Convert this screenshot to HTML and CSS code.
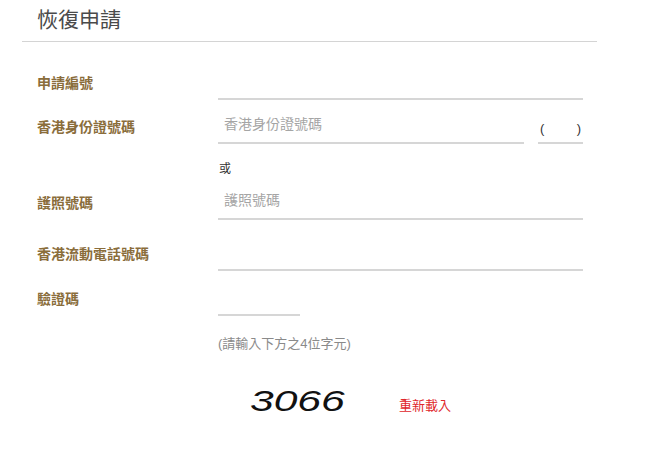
FILE: index.html
```html
<!DOCTYPE html>
<html lang="zh-Hant">
<head>
<meta charset="utf-8">
<title>恢復申請</title>
<link rel="stylesheet" href="styles.css">
</head>
<body>
<div class="page">
  <div class="header">
    <h1 class="title">恢復申請</h1>
  </div>
  <form class="form">
    <div class="row row-first">
      <label class="label">申請編號</label>
      <div class="field"><input class="input" type="text"></div>
    </div>
    <div class="row row-id">
      <label class="label">香港身份證號碼</label>
      <div class="field field-id">
        <input class="input input-id" type="text" placeholder="香港身份證號碼">
        <div class="check">
          <span class="paren">(</span>
          <span class="paren">)</span>
        </div>
      </div>
    </div>
    <div class="row row-or">
      <span></span>
      <div class="or">或</div>
    </div>
    <div class="row row-passport">
      <label class="label">護照號碼</label>
      <div class="field"><input class="input" type="text" placeholder="護照號碼"></div>
    </div>
    <div class="row row-phone">
      <label class="label">香港流動電話號碼</label>
      <div class="field"><input class="input" type="text"></div>
    </div>
    <div class="row row-captcha">
      <label class="label">驗證碼</label>
      <div class="field"><input class="input input-captcha" type="text"></div>
    </div>
    <div class="row row-hint">
      <span></span>
      <div class="hint">(請輸入下方之4位字元)</div>
    </div>
    <div class="row row-image">
      <span></span>
      <div class="captcha-line">
        <div class="captcha-img"><span class="digits">3066</span></div>
        <a class="reload" href="#">重新載入</a>
      </div>
    </div>
  </form>
</div>
</body>
</html>
```

FILE: styles.css
```css
* { box-sizing: border-box; }
html, body { margin: 0; padding: 0; background: #fff; }
body {
  font-family: "Noto Sans CJK TC", "Noto Sans", "Liberation Sans", sans-serif;
  color: #333;
}
.page {
  margin-left: 22px;
  width: 575px;
}
.header {
  height: 42px;
  padding: 3px 0 0 15px;
  border-bottom: 1px solid #d4d4d4;
}
.title {
  margin: 0;
  font-size: 21px;
  line-height: 30px;
  font-weight: 400;
  color: #4a4a4a;
}
.form {
  padding-left: 15px;
}
.row {
  display: grid;
  grid-template-columns: 181px 365px;
  align-items: center;
}
.row-first { margin-top: 24px; }
.row-id { margin-top: 10px; }
.row-or { margin-top: 16px; }
.row-passport { margin-top: 10px; }
.row-phone { margin-top: 17px; }
.row-captcha { margin-top: 11px; }
.row-hint { margin-top: 19px; }
.row-image { margin-top: 31px; }

.label {
  font-size: 14px;
  font-weight: 700;
  color: #8a6d3b;
  line-height: 20px;
  padding-bottom: 3px;
}
.field {
  display: flex;
  align-items: flex-end;
}
.input {
  display: block;
  width: 100%;
  height: 34px;
  border: 0;
  border-bottom: 2px solid #d6d6d6;
  padding: 0 6px 6px;
  font-family: inherit;
  font-size: 14px;
  color: #333;
  background: transparent;
  outline: none;
}
.input::placeholder { color: #a5a5a5; }
.input-id { width: 306px; }
.check {
  margin-left: 14px;
  width: 45px;
  height: 34px;
  border-bottom: 2px solid #d6d6d6;
  display: flex;
  justify-content: space-between;
  align-items: center;
  padding: 4px 2px 0 2px;
}
.paren {
  font-family: "Liberation Sans", sans-serif;
  font-size: 13px;
  color: #333;
}
.input-captcha { width: 82px; }
.or {
  font-size: 12px;
  line-height: 16px;
  color: #333;
  padding-left: 1px;
}
.hint {
  font-family: "Liberation Sans", "Noto Sans CJK TC", sans-serif;
  font-size: 13px;
  line-height: 18px;
  color: #8a8a8a;
}
.captcha-line {
  display: flex;
  align-items: center;
}
.captcha-img {
  width: 118px;
  height: 34px;
  margin-left: 20px;
  display: flex;
  align-items: center;
  justify-content: center;
}
.digits {
  display: inline-block;
  font-family: "Liberation Sans", sans-serif;
  font-style: italic;
  font-size: 30px;
  line-height: 30px;
  color: #111;
  transform: scaleX(1.42);
}
.reload {
  margin-left: 43px;
  margin-top: 6px;
  font-size: 13px;
  color: #e0262b;
  text-decoration: none;
}
```
